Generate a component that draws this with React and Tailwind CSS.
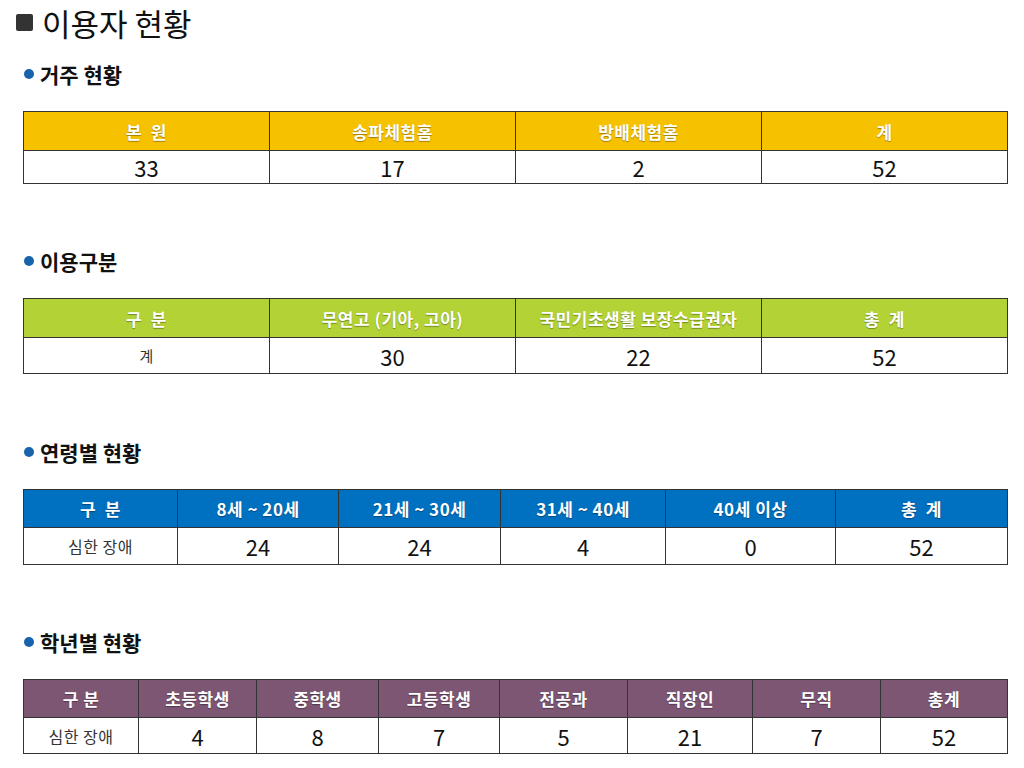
import React from "react";

const font = { fontFamily: '"Noto Sans CJK KR", "Noto Sans", sans-serif' };

const tables = [
  {
    title: "거주 현황",
    color: "bg-[#f6c200]",
    cols: [246, 246, 246, 246],
    head: ["본\u00a0\u00a0원", "송파체험홈", "방배체험홈", "계"],
    body: ["33", "17", "2", "52"],
    headH: "h-[39px]",
    bodyH: "h-[33px]",
    mt: "mt-[18px]",
  },
  {
    title: "이용구분",
    color: "bg-[#b3d235]",
    cols: [246, 246, 246, 246],
    head: ["구\u00a0\u00a0분", "무연고 (기아, 고아)", "국민기초생활 보장수급권자", "총\u00a0\u00a0계"],
    body: ["계", "30", "22", "52"],
    headH: "h-[39px]",
    bodyH: "h-[36px]",
    mt: "mt-[65px]",
  },
  {
    title: "연령별 현황",
    color: "bg-[#0070c0]",
    cols: [154, 161, 162, 165, 170, 172],
    head: ["구\u00a0\u00a0분", "8세 ~ 20세", "21세 ~ 30세", "31세 ~ 40세", "40세 이상", "총\u00a0\u00a0계"],
    body: ["심한 장애", "24", "24", "4", "0", "52"],
    headH: "h-[38px]",
    bodyH: "h-[37px]",
    mt: "mt-[66px]",
  },
  {
    title: "학년별 현황",
    color: "bg-[#7d5674]",
    cols: [115, 118, 122, 121, 128, 125, 128, 127],
    head: ["구 분", "초등학생", "중학생", "고등학생", "전공과", "직장인", "무직", "총계"],
    body: ["심한 장애", "4", "8", "7", "5", "21", "7", "52"],
    headH: "h-[38px]",
    bodyH: "h-[36px]",
    mt: "mt-[65px]",
  },
];

const StatTable = ({ t }) => (
  <section>
    <h2 className={`${t.mt} flex h-[24px] items-center text-[21px] font-bold leading-none text-[#111]`}>
      <span className="ml-[24px] mr-[6px] inline-block h-[10px] w-[10px] rounded-full bg-[#1764ad]"></span>
      {t.title}
    </h2>
    <table className="ml-[23px] mt-[25px] w-[984px] table-fixed border-collapse border border-[#555]">
      <colgroup>
        {t.cols.map((w, i) => (
          <col key={i} style={{ width: w }} />
        ))}
      </colgroup>
      <thead>
        <tr className={`${t.headH} ${t.color}`}>
          {t.head.map((h, i) => (
            <th
              key={i}
              className="border border-[#333] p-0 text-center text-[17px] font-bold leading-none tracking-[0.5px] text-white [text-shadow:0_1px_1px_rgba(0,0,0,0.35)]"
            >
              {h}
            </th>
          ))}
        </tr>
      </thead>
      <tbody>
        <tr className={`${t.bodyH} bg-white`}>
          {t.body.map((b, i) => {
            const label = i === 0 && isNaN(Number(b));
            const cls =
              b === "계"
                ? "text-[15px] text-[#333]"
                : label
                ? "text-[16px] tracking-[0.5px] text-[#333]"
                : "text-[22px] text-[#111]";
            return (
              <td key={i} className={`border border-[#333] p-0 text-center leading-none ${cls}`}>
                {b}
              </td>
            );
          })}
        </tr>
      </tbody>
    </table>
  </section>
);

export default function App() {
  return (
    <div className="min-h-screen w-[1024px] bg-white" style={font}>
      <h1 className="flex h-[44px] items-center text-[31px] font-normal leading-none text-[#111]">
        <span className="ml-[16px] mr-[9px] inline-block h-[17px] w-[17px] rounded-[2px] bg-[#333]"></span>
        이용자 현황
      </h1>
      {tables.map((t, i) => (
        <StatTable key={i} t={t} />
      ))}
    </div>
  );
}
